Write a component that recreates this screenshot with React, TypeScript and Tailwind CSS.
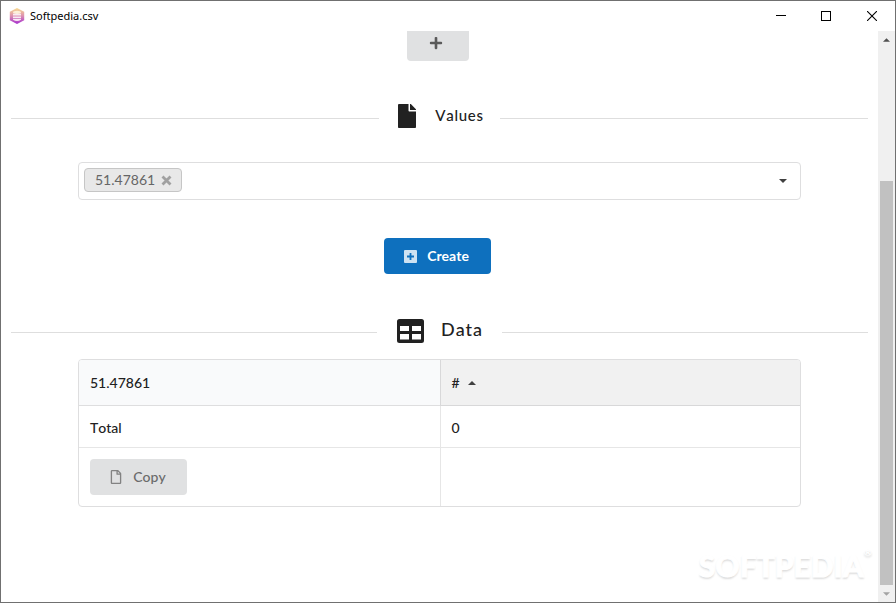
import type { ReactNode } from "react";
import { FaFile, FaPlus, FaRegFile } from "react-icons/fa";

function AppIcon() {
  return (
    <svg viewBox="0 0 16 16" className="h-4 w-4" aria-hidden="true">
      <defs>
        <linearGradient id="hex" x1="0" y1="0" x2="0" y2="1">
          <stop offset="0" stopColor="#f8dc90" />
          <stop offset="0.5" stopColor="#dc8fb0" />
          <stop offset="1" stopColor="#a62fd0" />
        </linearGradient>
      </defs>
      <path d="M8 0 15.200 3.800v8.400L8 16 .8 12.200V3.800z" fill="url(#hex)" />
      <ellipse cx="8" cy="4.300" rx="4" ry="1.600" fill="#fdf0d8" />
      <path d="M4 5.800h8v1.800H4zM4 8.400h8v1.800H4zM4 11h8v.8q-4 2.400-8 0z" fill="#f9eaf4" />
    </svg>
  );
}

function PlusSquareIcon() {
  return (
    <svg viewBox="0 0 13 13" className="h-[13px] w-[13px] opacity-80" aria-hidden="true">
      <rect width="13" height="13" rx="1" fill="currentColor" />
      <path d="M3 6.500h7M6.500 3v7" stroke="#0e70be" strokeWidth="1.800" />
    </svg>
  );
}

function TableIcon() {
  return (
    <svg viewBox="0 0 27 24" className="h-6 w-[27px]" aria-hidden="true">
      <path
        fillRule="evenodd"
        fill="currentColor"
        d="M2.500 0h22A2.500 2.500 0 0 1 27 2.500v19a2.500 2.500 0 0 1-2.500 2.500h-22A2.500 2.500 0 0 1 0 21.500v-19A2.500 2.500 0 0 1 2.500 0zM3 7v5h9V7zM15 7v5h9V7zM3 15v5.500h9V15zM15 15v5.500h9V15z"
      />
    </svg>
  );
}

function CrossIcon() {
  return (
    <svg viewBox="0 0 11 11" className="h-[11px] w-[11px] text-[#a0a0a0]" aria-hidden="true">
      <path d="M1.500 1.500l8 8M9.500 1.500l-8 8" stroke="currentColor" strokeWidth="2.800" />
    </svg>
  );
}

function TitleBar() {
  return (
    <header className="flex h-[30px] shrink-0 items-center justify-between pl-2 font-['Noto_Sans','Open_Sans',sans-serif] text-black">
      <div className="flex items-center gap-[5px]">
        <AppIcon />
        <h1 className="text-[11px] leading-4">Softpedia.csv</h1>
      </div>
      <div className="flex h-full">
        <button aria-label="Minimize" className="flex w-[45px] items-center justify-center">
          <svg className="h-[10px] w-[10px]" viewBox="0 0 10 10" shapeRendering="crispEdges"><path d="M0 4.500h10" stroke="#000" /></svg>
        </button>
        <button aria-label="Maximize" className="flex w-[45px] items-center justify-center">
          <svg className="h-[10px] w-[10px]" viewBox="0 0 10 10" shapeRendering="crispEdges"><path d="M.5.5h9v9h-9z" fill="none" stroke="#000" /></svg>
        </button>
        <button aria-label="Close" className="flex w-[47px] items-center justify-center">
          <svg className="h-[10px] w-[10px]" viewBox="0 0 10 10"><path d="M0 0l10 10M10 0L0 10" stroke="#000" strokeWidth="1.100" /></svg>
        </button>
      </div>
    </header>
  );
}

function Divider({ children }: { children: ReactNode }) {
  return (
    <div className="flex items-center before:mt-1 before:h-px before:flex-1 before:bg-[#dedede] after:mt-1 after:h-px after:flex-1 after:bg-[#dedede]">
      {children}
    </div>
  );
}

function Triangle({ up = false, className }: { up?: boolean; className: string }) {
  return (
    <svg viewBox="0 0 8 4" className={className} aria-hidden="true">
      <path d={up ? "M0 4 4 0l4 4z" : "M0 0h8L4 4z"} fill="currentColor" />
    </svg>
  );
}

function Scrollbar() {
  return (
    <div className="flex w-[17px] shrink-0 flex-col items-center bg-[#f0f0f0]" aria-hidden="true">
      <div className="flex h-[17px] items-center">
        <Triangle up className="h-1 w-[7px] text-[#505050]" />
      </div>
      <div className="grow-[133]" />
      <div className="w-[13px] grow-[404] bg-[#c1c1c1]" />
      <div className="flex h-[17px] items-center">
        <Triangle className="h-1 w-[7px] text-[#a3a3a3]" />
      </div>
    </div>
  );
}

export default function App() {
  return (
    <div className="flex h-screen flex-col border border-[#707070] bg-white font-[Lato,sans-serif] text-sm text-[#212121] [font-kerning:none]">
      <TitleBar />
      <div className="flex min-h-0 flex-1">
        <main className="relative min-w-0 flex-1 overflow-hidden px-[10px]">
          <div className="flex justify-center pr-1">
            <button aria-label="Add" className="flex h-[30px] w-[62px] items-center justify-center rounded-b-[4px] bg-[#e0e1e2] pb-[6px] pr-1 text-[#5a5a5a]">
              <FaPlus className="h-[14px] w-[14px]" />
            </button>
          </div>

          <section className="mt-[41px]">
            <Divider>
              <h2 className="flex h-7 items-center gap-[14px] pl-[14px] pr-4 text-[15px] font-medium tracking-wider">
                <span className="flex w-7 justify-center"><FaFile className="h-6 w-6" /></span>
                Values
              </h2>
            </Divider>
            <div className="mx-[67px] mt-8 flex h-[38px] items-center rounded-[4px] border border-[#dededf] pl-[5px] pr-[13px]">
              <button className="mb-[2px] flex h-6 shrink-0 items-center gap-[6px] rounded-[4px] border border-[#c6c6c6] bg-[#e8e8e8] pl-[10px] pr-[9px] text-[14px] text-[#666]">
                51.47861
                <CrossIcon />
              </button>
              <input aria-label="Values" className="min-w-0 flex-1 bg-transparent outline-none" />
              <button aria-label="Show options"><Triangle className="h-1 w-2 text-[#404040]" /></button>
            </div>
            <div className="mt-[38px] flex justify-center pr-1">
              <button className="flex h-9 w-[107px] items-center justify-center gap-[10px] rounded-[4px] bg-[#0e70be] pr-[2px] font-bold text-white">
                <PlusSquareIcon />
                Create
              </button>
            </div>
          </section>

          <section className="mt-[42px]">
            <Divider>
              <h2 className="flex h-7 items-center gap-[14px] pl-[17px] pr-[19px] text-[18px] font-medium tracking-wider">
                <span className="mt-[2px] flex w-[33px] justify-center"><TableIcon /></span>
                Data
              </h2>
            </Divider>
            <div className="mx-[67px] mt-[15px] overflow-hidden rounded-[4px] border border-[#dededf]">
              <table className="w-full table-fixed border-separate border-spacing-0 text-left font-medium">
                <thead>
                  <tr className="h-[46px]">
                    <th scope="col" className="border-b border-[#dededf] bg-[#f9fafb] px-[11px] pb-0 pt-px font-medium">51.47861</th>
                    <th scope="col" aria-sort="ascending" className="border-b border-l border-[#d8d8d9] bg-[#f1f1f1] px-[11px] pb-0 pt-px font-medium">
                      <span className="flex items-center gap-2"># <Triangle up className="h-1 w-2 text-[#404040]" /></span>
                    </th>
                  </tr>
                </thead>
                <tbody>
                  <tr className="h-[42px]">
                    <td className="border-b border-[#e6e6e6] px-[11px] pb-0 pt-[2px]">Total</td>
                    <td className="border-b border-l border-[#e6e6e6] px-[11px] pb-0 pt-[2px]">0</td>
                  </tr>
                  <tr className="h-[58px]">
                    <td className="px-[11px]">
                      <button className="flex h-9 w-[97px] items-center justify-center gap-[10px] rounded-[4px] bg-[#e0e1e2] pr-[2px] text-[#6b6b6b]">
                        <FaRegFile className="h-[14px] w-[14px] opacity-80" />
                        Copy
                      </button>
                    </td>
                    <td className="border-l border-[#e6e6e6]" />
                  </tr>
                </tbody>
              </table>
            </div>
          </section>

          <div className="absolute bottom-[18px] right-[6px] flex items-start font-black text-white [-webkit-text-stroke:1px_white] [text-shadow:0_2px_2px_#dcdcdc]">
            <span className="text-[30px] leading-[38px]">SOFTPEDIA</span>
            <span className="text-[10px] leading-3 [-webkit-text-stroke:0]">®</span>
          </div>
        </main>
        <Scrollbar />
      </div>
    </div>
  );
}
